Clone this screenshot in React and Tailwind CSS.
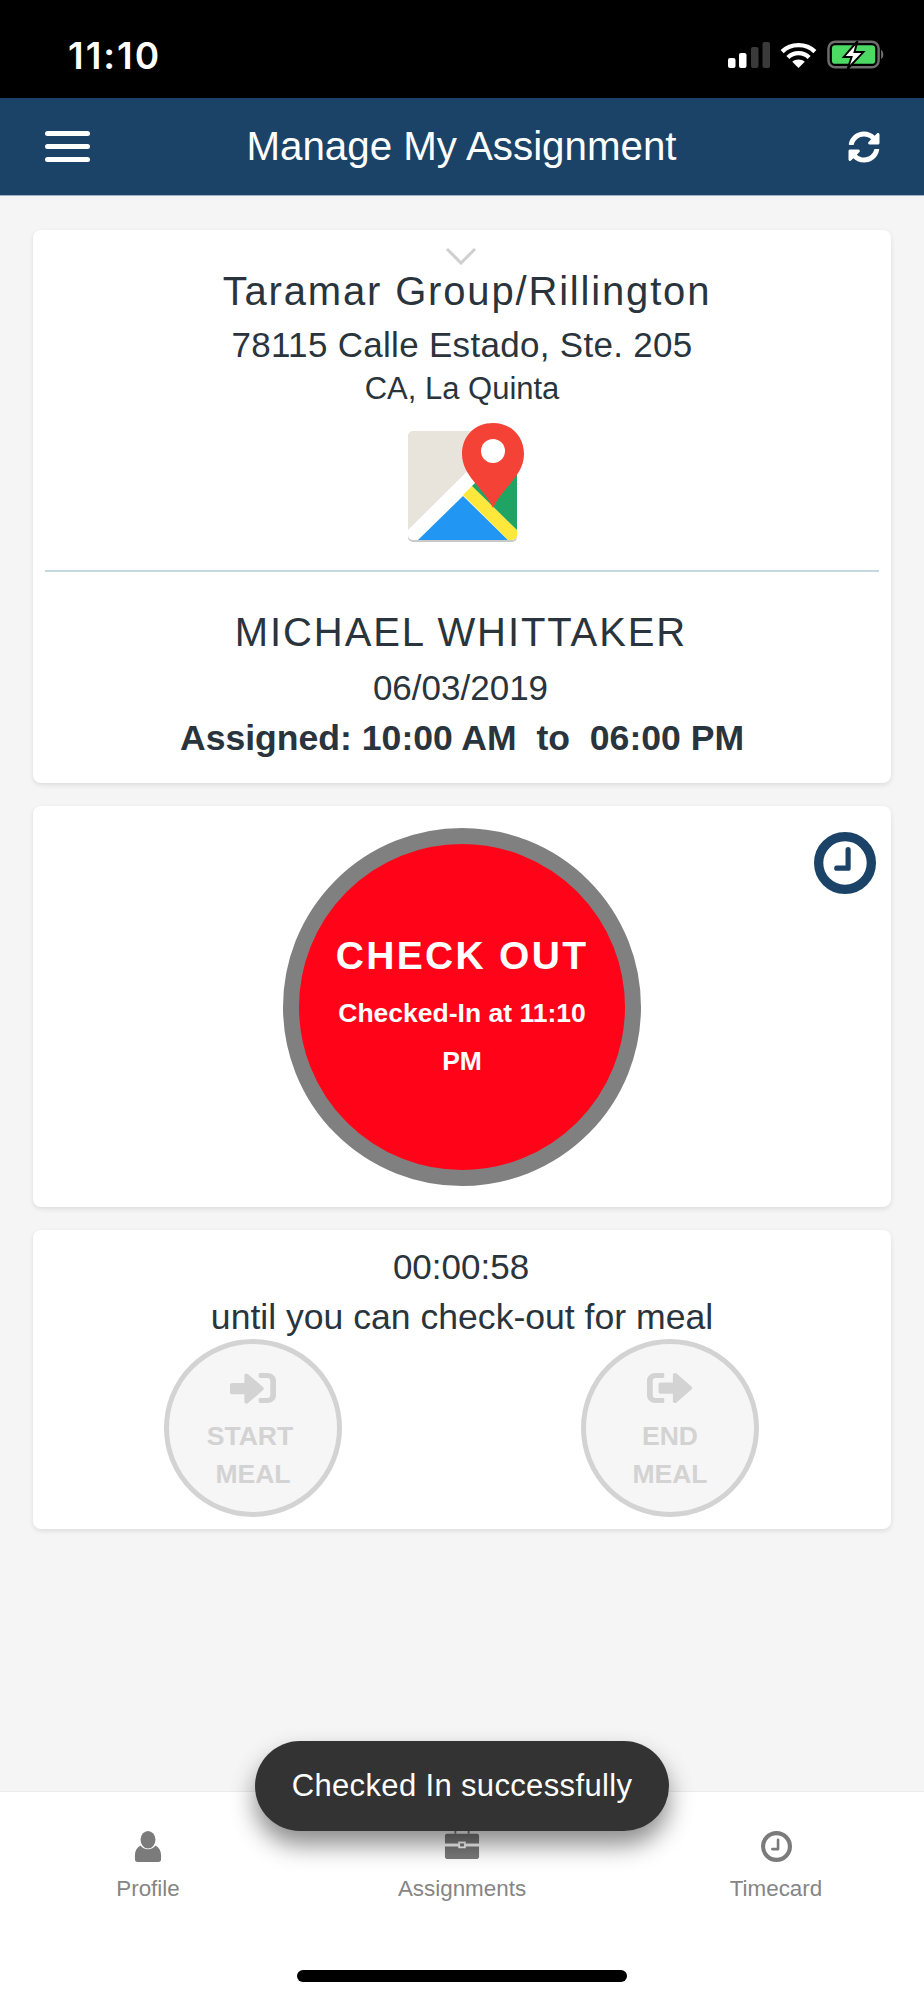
import { FaSyncAlt, FaSignInAlt, FaSignOutAlt } from "react-icons/fa";

const sans = "font-['Liberation_Sans',Arial,sans-serif]";

function SignalBars() {
  return (
    <svg width="42" height="26" viewBox="0 0 42 26">
      <rect x="0" y="16" width="7.5" height="10" rx="2" fill="#fff" />
      <rect x="11" y="11" width="7.5" height="15" rx="2" fill="#fff" />
      <rect x="23" y="5" width="7.5" height="21" rx="2" fill="#3a3a3a" />
      <rect x="34.5" y="0" width="7.5" height="26" rx="2" fill="#3a3a3a" />
    </svg>
  );
}

function Wifi() {
  return (
    <svg width="37" height="26" viewBox="0 0 38 27" fill="none" stroke="#fff" strokeWidth="4.5">
      <path d="M2 10 C11 1 27 1 36 10" />
      <path d="M8 16 C14 10 24 10 30 16" />
      <path d="M19 27 L12.5 20.5 C16 17.5 22 17.5 25.5 20.5 Z" fill="#fff" stroke="none" />
    </svg>
  );
}

function Battery() {
  return (
    <svg width="59" height="30" viewBox="0 0 60 30">
      <rect x="1.5" y="1.5" width="51" height="26" rx="7" fill="none" stroke="#6d6d6d" strokeWidth="2.5" />
      <rect x="5" y="5" width="44" height="19" rx="3.5" fill="#4cd964" />
      <path d="M55 10 C58 11 58 18 55 19 Z" fill="#6d6d6d" />
      <path d="M31 1 L17 17 H25 L21 29 L37 12 H28 Z" fill="#fff" stroke="#000" strokeWidth="2" />
    </svg>
  );
}

function MapsIcon() {
  return (
    <svg width="126" height="120" viewBox="0 0 126 120">
      <defs>
        <clipPath id="tile">
          <rect x="1" y="9" width="109" height="109" rx="5" />
        </clipPath>
      </defs>
      <rect x="1" y="10" width="109" height="110" rx="5" fill="#c9c9c9" />
      <g clipPath="url(#tile)">
        <rect x="1" y="9" width="109" height="109" fill="#e8e4dc" />
        <path d="M1 108 L110 0 V118 H1 Z" fill="#fff" />
        <path d="M11 118 L56 74 L101 118 Z" fill="#2196f3" />
        <path d="M56 73 L65 64 L110 108 V118 H101 Z" fill="#ffe83b" />
        <path d="M65 64 L110 20 V108 Z" fill="#1fa463" />
      </g>
      <path
        d="M86 1 C68 1 55 14 55 32 C55 54 77 66 86 86 C95 66 117 54 117 32 C117 14 104 1 86 1 Z"
        fill="#f44336"
      />
      <circle cx="86" cy="29" r="12" fill="#fff" />
    </svg>
  );
}

function PersonIcon() {
  return (
    <svg width="28" height="31" viewBox="0 0 30 32" fill="#7b7b7b" preserveAspectRatio="none">
      <ellipse cx="15" cy="9" rx="8" ry="9" />
      <path d="M7 15 C10 20 20 20 23 15 C27 17 29 21 29 25 V29 C29 31 28 32 26 32 H4 C2 32 1 31 1 29 V25 C1 21 3 17 7 15 Z" />
    </svg>
  );
}

function BriefcaseIcon() {
  return (
    <svg className="mb-[3px]" width="36" height="31" viewBox="0 0 38 32" fill="#7b7b7b" preserveAspectRatio="none">
      <path d="M12 6 V2 H26 V6" fill="none" stroke="#7b7b7b" strokeWidth="2" />
      <path d="M3 6 H35 C36 6 37 7 37 8 V16 H23 V14 H15 V16 H1 V8 C1 7 2 6 3 6 Z" />
      <path d="M1 19 H15 V21 H23 V19 H37 V30 C37 31 36 32 35 32 H3 C2 32 1 31 1 30 Z" />
      <rect x="17" y="16" width="4" height="3" />
    </svg>
  );
}

function ClockIcon({ size, color, ring, hand }) {
  return (
    <svg width={size} height={size} viewBox="0 0 60 60" fill="none" stroke={color}>
      <circle cx="30" cy="30" r={30 - ring / 2} strokeWidth={ring} />
      <path d="M33 17 V35 H22" strokeWidth={hand} strokeLinejoin="round" strokeLinecap="round" />
    </svg>
  );
}

function MealButton({ icon, lines }) {
  return (
    <div className="w-[178px] h-[178px] rounded-full border-[5px] border-[#d3d3d3] bg-[#f6f6f6] flex flex-col items-center pt-[24px] text-[#d3d3d3]">
      {icon}
      <div className="mt-[9px] text-[26.5px] leading-[38px] font-bold text-center">
        {lines.map((l) => (
          <div key={l} className={l === "START" ? "mr-[6px]" : ""}>{l}</div>
        ))}
      </div>
    </div>
  );
}

function NavItem({ icon, label }) {
  return (
    <div className="w-[200px] flex flex-col items-center">
      <div className="h-[32px] flex items-end">{icon}</div>
      <span className="mt-[14px] text-[22.4px] leading-[26px] text-[#858585]">{label}</span>
    </div>
  );
}

export default function App() {
  return (
    <div className={`${sans} relative w-[924px] h-[2000px] bg-[#f5f5f5] flex flex-col text-[#2a343c] overflow-hidden`}>
      {/* status bar */}
      <div className="h-[98px] bg-black flex items-center justify-between pl-[68px] pr-[38px] pt-[12px] text-white">
        <span className="font-['Inter',sans-serif] font-semibold text-[37px] leading-none tracking-[2px]">11:10</span>
        <div className="flex items-center gap-[10px]">
          <SignalBars />
          <Wifi />
          <Battery />
        </div>
      </div>

      {/* app bar */}
      <div className="h-[98px] bg-[#1b4368] border-b border-[#9fb4c6] flex items-center pl-[45px] pr-[44px] text-white">
        <div className="w-[45px] flex flex-col gap-[8px]">
          <div className="h-[5px] rounded-sm bg-white" />
          <div className="h-[5px] rounded-sm bg-white" />
          <div className="h-[5px] rounded-sm bg-white" />
        </div>
        <h1 className="flex-1 text-center text-[40.3px] font-normal leading-none pt-[2px] pr-[2px]">Manage My Assignment</h1>
        <div className="w-[45px] flex justify-end">
          <FaSyncAlt className="w-[32px] h-[32px]" />
        </div>
      </div>

      <main className="flex-1 px-[33px] pt-[34px] flex flex-col gap-[23px]">
        {/* site + employee card */}
        <section className="relative h-[553px] bg-white rounded-[8px] shadow-[0_2px_5px_rgba(0,0,0,0.1)] flex flex-col items-center px-[12px] pt-[36px]">
          <svg className="absolute top-[17px] ml-[-2px]" width="32" height="18" viewBox="0 0 32 18" fill="none" stroke="#cfcfcf" strokeWidth="3">
            <path d="M2 2 L16 16 L30 2" />
          </svg>
          <div className="ml-[10px] text-[40px] leading-[50px] tracking-[1.83px]">Taramar Group/Rillington</div>
          <div className="mt-[7px] text-[35px] leading-[44px] tracking-[0.3px]">78115 Calle Estado, Ste. 205</div>
          <div className="mt-[4px] text-[31px] leading-[36px]">CA, La Quinta</div>
          <div className="mt-[15px] ml-[15px] h-[120px]">
            <MapsIcon />
          </div>
          <div className="w-full mt-[28px] h-[2px] bg-[#c5d8e2]" />
          <div className="mt-[35px] text-[40px] leading-[50px] tracking-[1.9px] mr-[2px]">MICHAEL WHITTAKER</div>
          <div className="mt-[10px] text-[35px] leading-[42px] mr-[3px]">06/03/2019</div>
          <div className="mt-[7px] text-[35.6px] leading-[44px] font-bold whitespace-pre">Assigned: 10:00 AM  to  06:00 PM</div>
        </section>

        {/* check out card */}
        <section className="relative h-[401px] bg-white rounded-[8px] shadow-[0_2px_5px_rgba(0,0,0,0.1)] flex justify-center pt-[22px]">
          <div className="w-[358px] h-[358px] rounded-full border-[16px] border-[#808080] bg-[#ff0418] text-white text-center font-bold pt-[87px] px-[30px]">
            <div className="text-[39px] leading-[50px] tracking-[2.3px]">CHECK OUT</div>
            <div className="mt-[8px] text-[26.5px] leading-[48px]">Checked-In at 11:10 PM</div>
          </div>
          <div className="absolute top-[26px] right-[15px]">
            <ClockIcon size={62} color="#1b4368" ring={9} hand={5} />
          </div>
        </section>

        {/* meal card */}
        <section className="h-[299px] bg-white rounded-[8px] shadow-[0_2px_5px_rgba(0,0,0,0.1)] flex flex-col items-center pt-[15px]">
          <div className="text-[35px] leading-[44px] mr-[2px]">00:00:58</div>
          <div className="mt-[6px] text-[35.6px] leading-[44px]">until you can check-out for meal</div>
          <div className="w-full flex justify-between pl-[131px] pr-[132px]">
            <MealButton icon={<FaSignInAlt className="w-[46px] h-[40px]" preserveAspectRatio="none" />} lines={["START", "MEAL"]} />
            <MealButton icon={<FaSignOutAlt className="w-[46px] h-[40px]" preserveAspectRatio="none" />} lines={["END", "MEAL"]} />
          </div>
        </section>
      </main>

      {/* tab bar */}
      <nav className="h-[209px] bg-white border-t border-[#ececec] relative flex justify-between px-[48px] pt-[38px]">
        <NavItem icon={<PersonIcon />} label="Profile" />
        <NavItem icon={<BriefcaseIcon />} label="Assignments" />
        <NavItem icon={<ClockIcon size={31} color="#7b7b7b" ring={8} hand={5} />} label="Timecard" />
        <div className="absolute left-[297px] bottom-[18px] w-[330px] h-[12px] rounded-full bg-black" />
      </nav>

      {/* toast */}
      <div className="absolute left-[255px] top-[1741px] w-[414px] h-[90px] rounded-[45px] bg-[#333333] shadow-[0_14px_24px_rgba(0,0,0,0.45)] flex items-center justify-center text-white text-[31px] tracking-[0.35px]">
        Checked In successfully
      </div>
    </div>
  );
}
